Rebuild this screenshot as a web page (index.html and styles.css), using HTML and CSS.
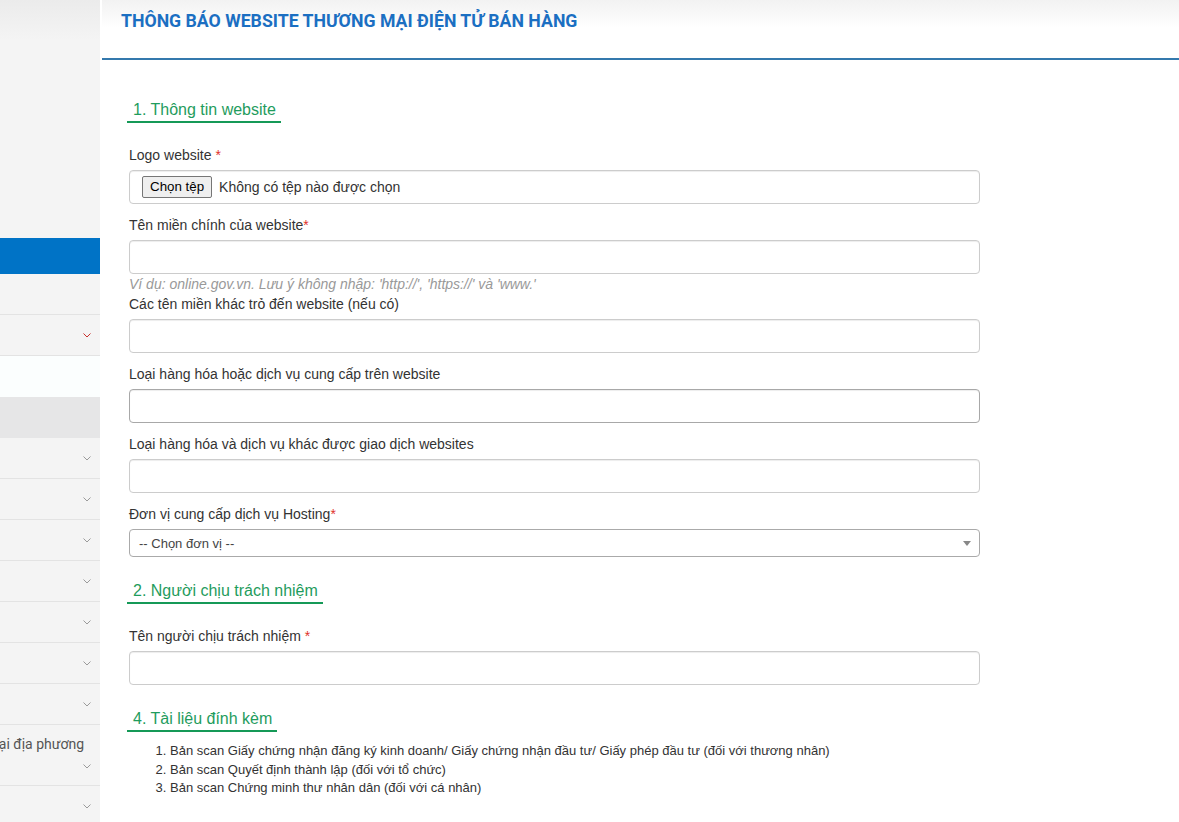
FILE: index.html
```html
<!DOCTYPE html>
<html lang="vi">
<head>
    <meta charset="utf-8">
    <title>Thông báo website thương mại điện tử bán hàng</title>
    <link rel="stylesheet" href="styles.css">
</head>
<body>
    <div class="layout">
        <aside class="sidebar">
            <div class="side-spacer"></div>
            <div class="side-item active"></div>
            <div class="side-item"></div>
            <div class="side-item">
                <svg class="chevron red" width="8" height="5" viewBox="0 0 8 5"><polyline points="0.5,0.5 4,4 7.5,0.5"/></svg>
            </div>
            <div class="side-item white"></div>
            <div class="side-item grey"></div>
            <div class="side-item"><svg class="chevron" width="8" height="5" viewBox="0 0 8 5"><polyline points="0.5,0.5 4,4 7.5,0.5"/></svg></div>
            <div class="side-item"><svg class="chevron" width="8" height="5" viewBox="0 0 8 5"><polyline points="0.5,0.5 4,4 7.5,0.5"/></svg></div>
            <div class="side-item"><svg class="chevron" width="8" height="5" viewBox="0 0 8 5"><polyline points="0.5,0.5 4,4 7.5,0.5"/></svg></div>
            <div class="side-item"><svg class="chevron" width="8" height="5" viewBox="0 0 8 5"><polyline points="0.5,0.5 4,4 7.5,0.5"/></svg></div>
            <div class="side-item"><svg class="chevron" width="8" height="5" viewBox="0 0 8 5"><polyline points="0.5,0.5 4,4 7.5,0.5"/></svg></div>
            <div class="side-item"><svg class="chevron" width="8" height="5" viewBox="0 0 8 5"><polyline points="0.5,0.5 4,4 7.5,0.5"/></svg></div>
            <div class="side-item"><svg class="chevron" width="8" height="5" viewBox="0 0 8 5"><polyline points="0.5,0.5 4,4 7.5,0.5"/></svg></div>
            <div class="side-item tall">
                <span class="side-text">Website thương mại địa phương</span>
                <svg class="chevron" width="8" height="5" viewBox="0 0 8 5"><polyline points="0.5,0.5 4,4 7.5,0.5"/></svg>
            </div>
            <div class="side-item"><svg class="chevron" width="8" height="5" viewBox="0 0 8 5"><polyline points="0.5,0.5 4,4 7.5,0.5"/></svg></div>
        </aside>

        <main class="main">
            <div class="page-header">
                <h1>THÔNG BÁO WEBSITE THƯƠNG MẠI ĐIỆN TỬ BÁN HÀNG</h1>
            </div>

            <div class="content">
                <form class="notice-form">
                    <h4 class="section-title">1. Thông tin website</h4>

                    <div class="form-group">
                        <label>Logo website <span class="required">*</span></label>
                        <div class="form-control file-control">
                            <span class="file-button">Chọn tệp</span>
                            <span class="file-name">Không có tệp nào được chọn</span>
                        </div>
                    </div>

                    <div class="form-group with-help">
                        <label>Tên miền chính của website<span class="required">*</span></label>
                        <input type="text" class="form-control">
                        <p class="help-block">Ví dụ: online.gov.vn. Lưu ý không nhập: 'http://', 'https://' và 'www.'</p>
                    </div>

                    <div class="form-group">
                        <label>Các tên miền khác trỏ đến website (nếu có)</label>
                        <input type="text" class="form-control">
                    </div>

                    <div class="form-group">
                        <label>Loại hàng hóa hoặc dịch vụ cung cấp trên website</label>
                        <input type="text" class="form-control dark">
                    </div>

                    <div class="form-group">
                        <label>Loại hàng hóa và dịch vụ khác được giao dịch websites</label>
                        <input type="text" class="form-control">
                    </div>

                    <div class="form-group">
                        <label>Đơn vị cung cấp dịch vụ Hosting<span class="required">*</span></label>
                        <div class="select-box">
                            <span>-- Chọn đơn vị --</span>
                            <span class="select-arrow"></span>
                        </div>
                    </div>

                    <h4 class="section-title">2. Người chịu trách nhiệm</h4>

                    <div class="form-group">
                        <label>Tên người chịu trách nhiệm <span class="required">*</span></label>
                        <input type="text" class="form-control">
                    </div>

                    <h4 class="section-title docs">4. Tài liệu đính kèm</h4>

                    <ol class="doc-list">
                        <li>Bản scan Giấy chứng nhận đăng ký kinh doanh/ Giấy chứng nhận đầu tư/ Giấy phép đầu tư (đối với thương nhân)</li>
                        <li>Bản scan Quyết định thành lập (đối với tổ chức)</li>
                        <li>Bản scan Chứng minh thư nhân dân (đối với cá nhân)</li>
                    </ol>
                </form>
            </div>
        </main>
    </div>
</body>
</html>
```

FILE: styles.css
```css
body {
    margin: 0;
    font-family: "Liberation Sans", Arial, sans-serif;
    font-size: 14px;
    color: #333;
    background-color: #fff;
    overflow: hidden;
}

.layout {
    display: flex;
    height: 822px;
}

/* Sidebar */
.sidebar {
    width: 100px;
    flex: none;
    background: #f4f4f4 linear-gradient(#ebebeb, #f4f4f4 40px) no-repeat;
    overflow: hidden;
    font-family: Roboto, "Liberation Sans", sans-serif;
}

.side-spacer {
    height: 238px;
}

.side-item {
    display: flex;
    align-items: center;
    justify-content: flex-end;
    height: 40px;
    padding-right: 9px;
    border-bottom: 1px solid #e3e3e3;
}

.side-item.active {
    height: 36px;
    background-color: #0073c6;
    border-bottom: none;
}

.side-item.white {
    height: 41px;
    background-color: #fbfefe;
    border-bottom: none;
}

.side-item.grey {
    height: 41px;
    background-color: #e6e6e7;
    border-bottom: none;
}

.side-item.tall {
    flex-direction: column;
    align-items: flex-end;
    justify-content: flex-start;
    height: 61px;
    padding-top: 10px;
    box-sizing: border-box;
}

.side-text {
    white-space: nowrap;
    font-size: 14px;
    line-height: 19px;
    color: #555;
    margin-right: 7px;
}

.side-item.tall .chevron {
    margin-top: 10px;
}

.chevron {
    fill: none;
    stroke: #9a9a9a;
    stroke-width: 1;
}

.chevron.red {
    stroke: #c9302c;
}

/* Main */
.main {
    flex: 1;
    margin-left: 2px;
    background-color: #fff;
}

.page-header {
    height: 58px;
    padding-left: 19px;
    border-bottom: 2px solid #3479ad;
    background: linear-gradient(#f2f2f2, #fff 28px);
}

.page-header h1 {
    margin: 0;
    font-family: Roboto, "Liberation Sans", sans-serif;
    font-size: 17.7px;
    font-weight: bold;
    line-height: 42px;
    color: #1b6fc2;
}

.content {
    padding: 16px 27px 0;
}

.notice-form {
    max-width: 851px;
}

.section-title {
    width: fit-content;
    margin: 23px 0 22px -2px;
    padding: 0 5px 0 6px;
    font-size: 16px;
    font-weight: normal;
    line-height: 22px;
    color: #1f9c5d;
    border-bottom: 2px solid #159957;
}

.section-title.docs {
    margin-bottom: 10px;
}

.form-group {
    margin-bottom: 11px;
}

.form-group.with-help {
    margin-bottom: 1px;
}

.form-group label {
    display: block;
    margin-bottom: 5px;
    line-height: 20px;
}

.required {
    color: #e0312b;
}

.form-control {
    display: block;
    width: 100%;
    height: 34px;
    box-sizing: border-box;
    padding: 6px 12px;
    font-family: "Liberation Sans", Arial, sans-serif;
    font-size: 14px;
    color: #555;
    background-color: #fff;
    border: 1px solid #ccc;
    border-radius: 4px;
    box-shadow: inset 0 1px 1px rgba(0, 0, 0, 0.075);
}

.form-control.dark {
    border-color: #a8a8a8;
}

.file-control {
    display: flex;
    align-items: center;
    padding: 0 12px;
}

.file-button {
    height: 20px;
    padding: 0 7px;
    line-height: 20px;
    font-size: 13.33px;
    color: #000;
    background-color: #efefef;
    border: 1px solid #767676;
    border-radius: 2px;
    margin-right: 7px;
}

.file-name {
    color: #333;
    font-size: 14px;
}

.help-block {
    margin: 1px 0 0;
    font-size: 14px;
    font-style: italic;
    line-height: 18px;
    color: #999;
}

.select-box {
    display: flex;
    align-items: center;
    justify-content: space-between;
    height: 28px;
    box-sizing: border-box;
    padding: 0 8px 0 9px;
    font-size: 13px;
    color: #444;
    border: 1px solid #aaa;
    border-radius: 4px;
}

.select-arrow {
    width: 0;
    height: 0;
    border-top: 5px solid #888;
    border-left: 4px solid transparent;
    border-right: 4px solid transparent;
}

.doc-list {
    margin: 0;
    padding-left: 41px;
    font-size: 13px;
    line-height: 18.5px;
    color: #333;
}
```
